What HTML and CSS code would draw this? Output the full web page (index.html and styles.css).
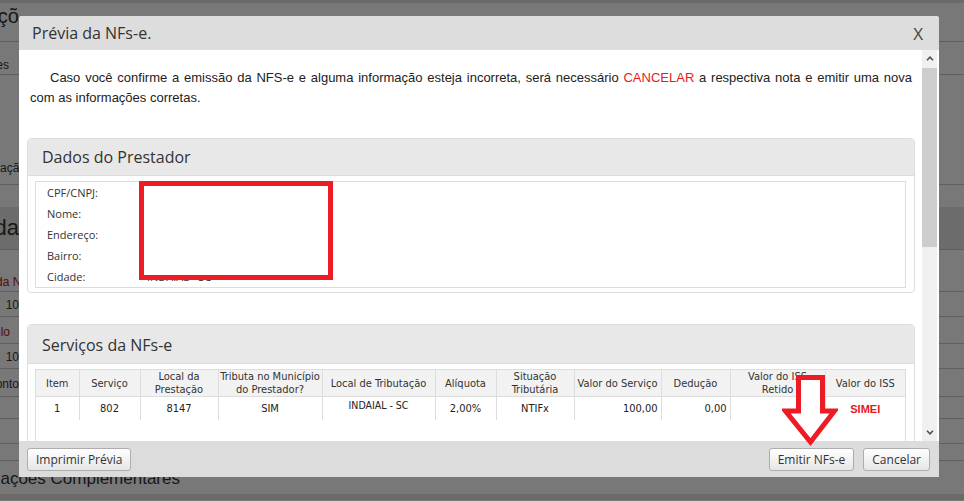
FILE: index.html
```html
<!DOCTYPE html>
<html lang="pt-BR">
<head>
    <meta charset="UTF-8">
    <title>Emissão de NFS-e</title>
    <link rel="stylesheet" href="styles.css">
</head>
<body>

<!-- pagina por tras do modal -->
<div class="page">
    <div class="bg-top"></div>
    <div class="bg-row bg-titulo"><div class="tail t-titulo"><span>Informações</span></div></div>
    <div class="bg-row bg-aba"><div class="tail small t-aba">Opções</div></div>
    <div class="bg-row bg-area"><div class="tail small t-area">Informação</div></div>
    <div class="bg-row bg-vazio"></div>
    <div class="bg-row bg-faixa"><div class="tail">Dados da</div></div>
    <div class="bg-row bg-campo"><div class="tail small red t-nota">Alíquota da Nota</div></div>
    <div class="bg-row bg-input"><div class="tail small">10</div></div>
    <div class="bg-row bg-campo2"><div class="tail small red t-calc">Cálculo</div></div>
    <div class="bg-row bg-input"><div class="tail small">10</div></div>
    <div class="bg-row bg-input alto"><div class="tail small">Desconto</div></div>
    <div class="bg-row bg-input baixo"></div>
    <div class="bg-row bg-input"></div>
    <div class="bg-row bg-input menor"></div>
    <div class="bg-row bg-compl"><div class="tail t-compl">Informações Complementares</div></div>
    <div class="bg-top fim"></div>
</div>

<div class="overlay"></div>

<div class="modal">
    <div class="modal-header">
        <span class="modal-title">Prévia da NFs-e.</span>
        <span class="close">X</span>
    </div>

    <div class="modal-body">
        <div class="modal-content">
            <p class="aviso">Caso você confirme a emissão da NFS-e e alguma informação esteja incorreta, será necessário <span class="cancelar">CANCELAR</span> a respectiva nota e emitir uma nova com as informações corretas.</p>

            <div class="panel">
                <div class="panel-heading">Dados do Prestador</div>
                <div class="panel-body">
                    <div class="dados">
                        <div class="dado"><span class="rotulo">CPF/CNPJ:</span><span class="valor"></span></div>
                        <div class="dado"><span class="rotulo">Nome:</span><span class="valor"></span></div>
                        <div class="dado"><span class="rotulo">Endereço:</span><span class="valor"></span></div>
                        <div class="dado"><span class="rotulo">Bairro:</span><span class="valor"></span></div>
                        <div class="dado"><span class="rotulo">Cidade:</span><span class="valor">INDAIAL - SC</span></div>
                        <div class="tarja"></div>
                    </div>
                </div>
            </div>

            <div class="panel">
                <div class="panel-heading alta">Serviços da NFs-e</div>
                <div class="panel-body">
                    <div class="tabela-box">
                        <table class="servicos">
                            <colgroup>
                                <col class="c-item"><col class="c-serv"><col class="c-local"><col class="c-trib">
                                <col class="c-localtrib"><col class="c-aliq"><col class="c-sit"><col class="c-valor">
                                <col class="c-ded"><col class="c-retido"><col class="c-iss">
                            </colgroup>
                            <tr>
                                <th>Item</th>
                                <th>Serviço</th>
                                <th>Local da<br>Prestação</th>
                                <th>Tributa no Município<br>do Prestador?</th>
                                <th>Local de Tributação</th>
                                <th>Alíquota</th>
                                <th>Situação<br>Tributária</th>
                                <th>Valor do Serviço</th>
                                <th>Dedução</th>
                                <th>Valor do ISS<br>Retido</th>
                                <th>Valor do ISS</th>
                            </tr>
                            <tr>
                                <td>1</td>
                                <td>802</td>
                                <td>8147</td>
                                <td>SIM</td>
                                <td class="cidade">INDAIAL - SC</td>
                                <td>2,00%</td>
                                <td>NTIFx</td>
                                <td class="num">100,00</td>
                                <td class="num">0,00</td>
                                <td></td>
                                <td class="simei">SIMEI</td>
                            </tr>
                        </table>
                    </div>
                </div>
            </div>
        </div>

        <div class="scrollbar">
            <span class="sb-btn">
                <svg width="8" height="5" viewBox="0 0 8 5"><path d="M1 4.2 L4 1.2 L7 4.2" fill="none" stroke="#505050" stroke-width="1.6"/></svg>
            </span>
            <span class="sb-thumb"></span>
            <span class="sb-fill"></span>
            <span class="sb-btn">
                <svg width="8" height="5" viewBox="0 0 8 5"><path d="M1 0.8 L4 3.8 L7 0.8" fill="none" stroke="#505050" stroke-width="1.6"/></svg>
            </span>
        </div>
    </div>

    <div class="modal-footer">
        <button>Imprimir Prévia</button>
        <div class="acoes">
            <button>Emitir NFs-e</button>
            <button>Cancelar</button>
        </div>
    </div>

    <!-- seta de destaque -->
    <svg class="seta" width="56" height="71" viewBox="0 0 56 71">
        <polygon points="16.5,2.5 40.5,2.5 40.5,36 52.5,36 28.5,67 3.5,36 16.5,36" fill="#fff" stroke="#ed1c24" stroke-width="5"/>
    </svg>
</div>

</body>
</html>
```

FILE: styles.css
```css
body {
    margin: 0;
    font-family: "Open Sans", sans-serif;
    color: #333;
    background: #fff;
    overflow: hidden;
}

/* pagina de fundo */
.page {
    height: 501px;
    font-family: "Liberation Sans", Arial, sans-serif;
}

.bg-top { height: 3px; background: #e2e2e2; }
.bg-top.fim { height: 6px; }

.bg-row { border-bottom: 1px solid #c8c8c8; }
.bg-titulo { height: 38px; font-size: 20px; }
.bg-aba { height: 32px; }
.bg-area { height: 109px; }
.bg-vazio { height: 22px; border-bottom: none; }
.bg-faixa { height: 42px; line-height: 42px; font-size: 22px; background: #e6e6e6; }
.bg-campo { height: 41px; }
.bg-input { height: 24px; line-height: 26px; }
.bg-input.alto { height: 27px; line-height: 30px; }
.bg-input.baixo { height: 21px; }
.bg-input.menor { height: 16px; }
.bg-campo2 { height: 26px; line-height: 30px; }
.bg-compl { height: 33px; line-height: 36px; font-size: 17px; border-bottom: none; }

.tail {
    width: 19px;
    display: flex;
    justify-content: flex-end;
    overflow: hidden;
    white-space: nowrap;
}
.tail.small { font-size: 12px; }
.tail.red { color: #b02020; }

.t-titulo { line-height: 26px; }
.t-titulo span { margin-right: -21px; }
.t-aba { width: 9px; padding-top: 15px; line-height: 16px; }
.t-area { width: 26px; padding-top: 85px; line-height: 16px; }
.t-nota { width: 38px; padding-top: 24px; line-height: 16px; }
.t-calc { width: 10px; }
.t-compl { width: 180px; }

.overlay {
    position: fixed;
    inset: 0;
    background: rgba(0, 0, 0, 0.53);
}

/* modal */
.modal {
    position: fixed;
    left: 19px;
    top: 16px;
    width: 920px;
    height: 461px;
    display: flex;
    flex-direction: column;
    background: #fff;
    border-radius: 3px 3px 0 0;
}

.modal-header {
    height: 34px;
    flex: none;
    background: #ddd;
    display: flex;
    align-items: center;
    justify-content: space-between;
    padding: 0 16px 0 13px;
    border-radius: 3px 3px 0 0;
}

.modal-title { font-size: 16px; color: #333; }
.close { font-size: 17px; color: #444; }

.modal-body {
    flex: 1;
    min-height: 0;
    display: flex;
    padding-right: 2px;
}

.modal-content {
    flex: 1;
    overflow: hidden;
    padding: 0 7px 0 8px;
}

.scrollbar {
    width: 15px;
    background: #f0f0f0;
    display: flex;
    flex-direction: column;
}
.sb-btn {
    height: 17px;
    display: flex;
    align-items: center;
    justify-content: center;
}
.sb-thumb { height: 179px; margin-top: 1px; background: #cdcdcd; }
.sb-fill { flex: 1; }

.aviso {
    margin: 0 0 30px;
    padding: 18px 3px 0;
    font: 13px/20px "Liberation Sans", Arial, sans-serif;
    color: #222;
    text-align: justify;
    text-indent: 20px;
}
.cancelar { color: #e8191c; }

.panel {
    border: 1px solid #ddd;
    border-radius: 4px;
    margin-bottom: 31px;
}

.panel-heading {
    height: 36px;
    line-height: 36px;
    padding-left: 14px;
    background: #e8e8e8;
    border-bottom: 1px solid #ddd;
    border-radius: 4px 4px 0 0;
    font-size: 16px;
    color: #333;
}
.panel-heading.alta { height: 38px; line-height: 40px; }

.panel-body { padding: 5px 8px 4px 7px; }

.dados {
    position: relative;
    border: 1px solid #ddd;
}

.dado {
    height: 21px;
    line-height: 21px;
    padding: 0 11px;
    font-size: 11px;
    color: #333;
    display: flex;
}
.rotulo { width: 100px; }

.tarja {
    position: absolute;
    left: 103px;
    top: -1px;
    width: 194px;
    height: 99px;
    box-sizing: border-box;
    border: 5px solid #ed1c24;
    background: #fff;
}

.tabela-box {
    border: 1px solid #ddd;
    min-height: 120px;
}

.servicos {
    width: 100%;
    table-layout: fixed;
    border-collapse: collapse;
    border-style: hidden;
    font-family: "DejaVu Sans", sans-serif;
    font-stretch: condensed;
    font-size: 11px;
    color: #333;
}

.servicos th {
    height: 26px;
    background: #f2f2f2;
    font-weight: normal;
    line-height: 13px;
    border: 1px solid #ddd;
    padding: 0;
    white-space: nowrap;
}

.servicos td {
    height: 21px;
    text-align: center;
    border: 1px solid #ddd;
    color: #222;
    padding: 0 3px;
}
.servicos td.num { text-align: right; }
.servicos td.cidade { vertical-align: top; padding-top: 2px; font-size: 10.5px; }
.servicos td.simei {
    color: #e8191c;
    font: bold 11px "Liberation Sans", Arial, sans-serif;
}

.c-item { width: 43px; }
.c-serv { width: 61px; }
.c-local { width: 78px; }
.c-trib { width: 104px; }
.c-localtrib { width: 113px; }
.c-aliq { width: 61px; }
.c-sit { width: 78px; }
.c-valor { width: 87px; }
.c-ded { width: 69px; }
.c-retido { width: 95px; }
.c-iss { width: 80px; }

.modal-footer {
    height: 36px;
    flex: none;
    background: #dcdcdc;
    display: flex;
    align-items: center;
    justify-content: space-between;
    padding: 0 9px 0 8px;
}

.acoes { display: flex; gap: 9px; }

button {
    height: 23px;
    padding: 0 8px;
    font-family: "Open Sans", sans-serif;
    font-size: 12px;
    color: #333;
    border: 1px solid #adadad;
    border-radius: 3px;
    background: linear-gradient(#fff, #e6e6e6);
    cursor: pointer;
}

.seta {
    position: absolute;
    left: 763px;
    top: 359px;
}
```
